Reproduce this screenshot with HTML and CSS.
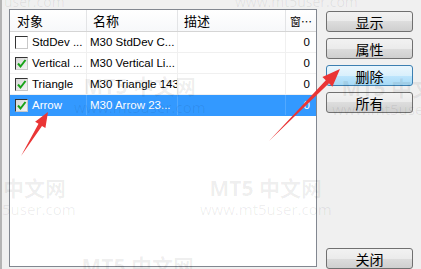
FILE: index.html
```html
<!DOCTYPE html>
<html lang="zh-CN">
<head>
  <meta charset="UTF-8">
  <title>对象列表</title>
  <link rel="stylesheet" href="styles.css">
</head>
<body>
  <div class="dialog">
    <div class="list">
      <div class="row head">
        <div class="cell">对象</div>
        <div class="cell">名称</div>
        <div class="cell">描述</div>
        <div class="cell narrow">窗…</div>
      </div>
      <div class="row">
        <div class="cell"><span class="check"></span>StdDev ...</div>
        <div class="cell">M30 StdDev C...</div>
        <div class="cell"></div>
        <div class="cell num">0</div>
      </div>
      <div class="row">
        <div class="cell"><span class="check on"><svg viewBox="0 0 11 11"><path d="M2 5.5 L4.5 8.5 L9.5 2"/></svg></span>Vertical ...</div>
        <div class="cell">M30 Vertical Li...</div>
        <div class="cell"></div>
        <div class="cell num">0</div>
      </div>
      <div class="row">
        <div class="cell"><span class="check on"><svg viewBox="0 0 11 11"><path d="M2 5.5 L4.5 8.5 L9.5 2"/></svg></span>Triangle</div>
        <div class="cell">M30 Triangle 143</div>
        <div class="cell"></div>
        <div class="cell num">0</div>
      </div>
      <div class="row selected">
        <div class="cell"><span class="check on"><svg viewBox="0 0 11 11"><path d="M2 5.5 L4.5 8.5 L9.5 2"/></svg></span>Arrow</div>
        <div class="cell">M30 Arrow 23...</div>
        <div class="cell"></div>
        <div class="cell num">0</div>
      </div>
    </div>
    <div class="buttons">
      <button class="btn">显示</button>
      <button class="btn">属性</button>
      <button class="btn hover">删除</button>
      <button class="btn">所有</button>
      <button class="btn close">关闭</button>
    </div>
  </div>

  <!-- watermark of the source site -->
  <div class="marks">
    <div class="wm wm-top-left">user.com</div>
    <div class="wm wm-top-right">www.mt5user.com</div>
    <div class="wm-block wm-mid"><b>MT5 中文网</b><span>www.mt5user.com</span></div>
    <div class="wm-block wm-right"><b>MT5 中文网</b><span>www.mt5user.com</span></div>
    <div class="wm-block wm-center"><b>MT5 中文网</b><span>www.mt5user.com</span></div>
    <div class="wm-block wm-left"><b>MT5 中文网</b><span>www.mt5user.com</span></div>
    <div class="wm-block wm-bottom"><b>MT5 中文网</b><span>www.mt5user.com</span></div>
  </div>

  <svg class="arrows" viewBox="0 0 421 269">
    <polygon points="19,156 36.5,123.8 33.1,121.7 46,112 43.4,127.9 40,125.9"/>
    <polygon points="267,141 323.8,80.3 320.4,76.9 338,69 330.4,86.7 327,83.3"/>
  </svg>
</body>
</html>
```

FILE: styles.css
```css
html { overflow: hidden; }
body { margin: 0; background: #f0f0f0; font-family: "Liberation Sans", "Noto Sans CJK SC", sans-serif; font-size: 11.5px; color: #000; overflow: hidden; height: 269px; border-left: 2px solid #b4b4b4; position: relative; }
.dialog { display: flex; padding: 9px 0 0 7px; height: 260px; }

.list { width: 306px; height: 256px; background: #fff; border: 1px solid #828790; }
.row { display: grid; grid-template-columns: 77px 91px 108px 1fr; height: 20px; border-bottom: 1px solid #f0f0f0; }
.row .cell { display: flex; align-items: center; padding: 0 2px 0 3px; border-right: 1px solid #f0f0f0; white-space: nowrap; overflow: hidden; }
.row .cell:first-child { padding-left: 5px; }
.row .cell:last-child { border-right: none; }
.row .num { justify-content: flex-end; padding-right: 6px; }
.head { height: 21px; background: linear-gradient(#ffffff, #f7f8fa); border-bottom: 1px solid #d5d5d5; }
.head .cell { font-family: "Noto Sans CJK SC", sans-serif; font-size: 13px; padding-left: 6px; border-right: 1px solid #e3e4e6; }
.head .cell:first-child { padding-left: 7px; }
.head .narrow { font-size: 11px; padding-left: 4px; }
.selected { background: #3399ff; color: #fff; border-bottom-color: #3399ff; }
.selected .cell { border-right-color: #52a9ff; }

.check { width: 11px; height: 11px; margin-right: 4px; flex: none; border: 1px solid; border-color: #333 #c8c8c8 #c8c8c8 #333; background: #fff; }
.check.on { background: linear-gradient(135deg, #d6d6d6, #f4f4f4); }
.check svg { display: block; width: 11px; height: 11px; }
.check path { fill: none; stroke: #17a317; stroke-width: 2; }

.buttons { display: flex; flex-direction: column; gap: 6px; margin-left: 9px; padding-top: 2px; width: 87px; }
.btn { height: 21px; padding: 0; border: 1px solid #707070; border-radius: 3px; background: linear-gradient(#f2f2f2 0%, #ebebeb 50%, #dddddd 50%, #cfcfcf 100%); font-family: "Noto Sans CJK SC", sans-serif; font-size: 14px; line-height: 18px; color: #000; }
.btn.hover { border-color: #3c7fb1; background: linear-gradient(#eaf6fd 0%, #d9f0fc 50%, #bee6fd 50%, #a7d9f5 100%); }
.btn.close { margin-top: auto; }

.marks { position: absolute; left: 0; top: 0; right: 0; bottom: 0; overflow: hidden; pointer-events: none; }
.wm, .wm-block { position: absolute; color: rgba(0, 0, 0, 0.07); font-family: "Open Sans", "Noto Sans CJK SC", sans-serif; white-space: nowrap; }
.wm { font-size: 14px; }
.wm-block { display: flex; flex-direction: column; align-items: center; }
.wm-block b { font-size: 21px; line-height: 24px; }
.wm-block span { font-size: 15px; line-height: 18px; }
.wm-top-left { left: 2px; top: -8px; }
.wm-top-right { left: 233px; top: -8px; }
.wm-mid { left: 72px; top: 74px; }
.wm-right { left: 330px; top: 76px; }
.wm-center { left: 198px; top: 176px; }
.wm-left { left: -58px; top: 176px; }
.wm-bottom { left: 70px; top: 254px; }

.arrows { position: absolute; left: 0; top: 0; width: 421px; height: 269px; pointer-events: none; }
.arrows polygon { fill: #ea3535; }
```
